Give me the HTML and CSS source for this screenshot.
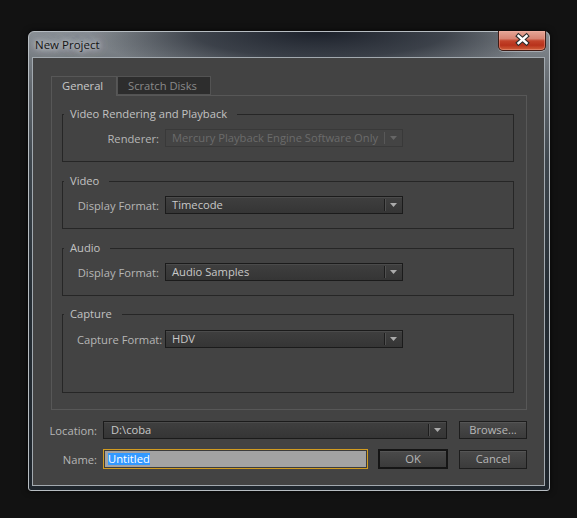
FILE: index.html
```html
<!DOCTYPE html>
<html>
<head>
<meta charset="utf-8">
<title>New Project</title>
<link rel="stylesheet" href="styles.css">
</head>
<body>
<div class="window">
  <div class="titlebar">
    <span class="title">New Project</span>
    <button class="close" aria-label="Close">
      <svg width="46" height="19" viewBox="0 0 46 19">
        <path d="M19.5 5 L27.5 12 M27.5 5 L19.5 12" stroke="#2b2b2b" stroke-width="4.6" stroke-linecap="square" fill="none"/>
        <path d="M19.5 5 L27.5 12 M27.5 5 L19.5 12" stroke="#ffffff" stroke-width="2.4" stroke-linecap="square" fill="none"/>
      </svg>
    </button>
  </div>
  <div class="client">
    <div class="tabs">
      <div class="tab active">General</div>
      <div class="tab inactive">Scratch Disks</div>
    </div>
    <div class="panel">
      <fieldset class="group">
        <legend>Video Rendering and Playback</legend>
        <div class="row">
          <span class="label">Renderer:</span>
          <div class="select disabled">
            <span class="value">Mercury Playback Engine Software Only</span>
            <span class="sep"></span>
            <span class="arrow"><svg width="7" height="4" viewBox="0 0 7 4"><polygon points="0,0 7,0 3.5,4" fill="#666"/></svg></span>
          </div>
        </div>
      </fieldset>
      <fieldset class="group">
        <legend>Video</legend>
        <div class="row">
          <span class="label">Display Format:</span>
          <div class="select">
            <span class="value">Timecode</span>
            <span class="sep"></span>
            <span class="arrow"><svg width="7" height="4" viewBox="0 0 7 4"><polygon points="0,0 7,0 3.5,4" fill="#ababab"/></svg></span>
          </div>
        </div>
      </fieldset>
      <fieldset class="group">
        <legend>Audio</legend>
        <div class="row">
          <span class="label">Display Format:</span>
          <div class="select">
            <span class="value">Audio Samples</span>
            <span class="sep"></span>
            <span class="arrow"><svg width="7" height="4" viewBox="0 0 7 4"><polygon points="0,0 7,0 3.5,4" fill="#ababab"/></svg></span>
          </div>
        </div>
      </fieldset>
      <fieldset class="group capture">
        <legend>Capture</legend>
        <div class="row">
          <span class="label">Capture Format:</span>
          <div class="select">
            <span class="value">HDV</span>
            <span class="sep"></span>
            <span class="arrow"><svg width="7" height="4" viewBox="0 0 7 4"><polygon points="0,0 7,0 3.5,4" fill="#ababab"/></svg></span>
          </div>
        </div>
      </fieldset>
    </div>
    <div class="bottom">
      <div class="brow">
        <span class="blabel">Location:</span>
        <div class="select loc">
          <span class="value">D:\coba</span>
          <span class="sep"></span>
          <span class="arrow"><svg width="7" height="4" viewBox="0 0 7 4"><polygon points="0,0 7,0 3.5,4" fill="#ababab"/></svg></span>
        </div>
        <div class="btn browse">Browse...</div>
      </div>
      <div class="brow">
        <span class="blabel">Name:</span>
        <div class="input"><span class="sel">Untitled</span></div>
        <div class="btn ok">OK</div>
        <div class="btn cancel">Cancel</div>
      </div>
    </div>
  </div>
</div>
</body>
</html>
```
FILE: styles.css
```css
html, body {
  margin: 0;
  padding: 0;
}
body {
  background: #121212;
  width: 577px;
  height: 518px;
  overflow: hidden;
  font-family: "Open Sans", "Noto Sans", sans-serif;
  font-size: 11.2px;
}
.window {
  box-sizing: border-box;
  width: 522px;
  height: 460px;
  margin: 31px 0 0 28px;
  border: 1px solid #b7bdc2;
  border-radius: 6px 6px 3px 3px;
  background:
    radial-gradient(ellipse 230px 46px at 56% 0, rgba(24, 29, 39, 0.97) 0%, rgba(24, 29, 39, 0.65) 55%, rgba(24, 29, 39, 0) 100%),
    linear-gradient(#888e93 0, #767c82 25px, #62686e 55px, #3e464d 130px, #252d34 260px, #1e252c 100%);
  box-shadow: 0 0 6px rgba(0, 0, 0, 0.7);
  display: flex;
  flex-direction: column;
}
.titlebar {
  height: 25px;
  flex: none;
  display: flex;
  justify-content: space-between;
  align-items: flex-start;
}
.title {
  margin: 5px 0 0 6px;
  font-size: 11.5px;
  line-height: 16px;
  color: #141414;
  text-shadow: 0 0 5px rgba(220, 224, 228, 1), 0 0 10px rgba(220, 224, 228, 0.9), 0 0 16px rgba(220, 224, 228, 0.75);
}
.close {
  box-sizing: border-box;
  width: 48px;
  height: 20px;
  margin: -1px 3px 0 0;
  padding: 0;
  border: 1px solid #3e1c16;
  border-top: none;
  border-radius: 0 0 5px 5px;
  background: linear-gradient(#e5a697 0, #d88473 40%, #c2432a 52%, #b8321b 75%, #d0603b 100%);
  box-shadow: inset 0 0 0 1px rgba(255, 190, 175, 0.35), 0 1px 0 rgba(220, 225, 230, 0.45);
  display: block;
}
.close svg {
  display: block;
}
.client {
  flex: 1;
  margin: 0 4px 4px 3px;
  border: 1px solid #a2a9af;
  background: #434343;
  padding: 18px 0 16px 0;
  display: flex;
  flex-direction: column;
}
.tabs {
  display: flex;
  height: 19px;
  margin-left: 18px;
}
.tab {
  box-sizing: border-box;
  height: 19px;
  line-height: 17px;
  padding-left: 10px;
  border: 1px solid #575757;
  white-space: nowrap;
}
.tab.active {
  width: 66px;
  height: 20px;
  border-bottom: none;
  background: #434343;
  color: #c9c9c9;
  position: relative;
  z-index: 1;
}
.tab.inactive {
  width: 94px;
  background: #2d2d2d;
  color: #8a8a8a;
  border-color: #535353;
}
.panel {
  box-sizing: border-box;
  width: 476px;
  margin-left: 18px;
  border: 1px solid #575757;
  padding: 11px 12px 16px 10px;
  display: flex;
  flex-direction: column;
  gap: 12px;
}
.group {
  margin: 0;
  padding: 0 0 14px 0;
  border: 1px solid #262626;
  min-inline-size: 0;
}
.group.capture {
  margin-top: -1px;
  padding-bottom: 44px;
}
.group legend {
  margin-left: 1px;
  padding: 0 10px 0 6px;
  line-height: 14px;
  color: #c2c2c2;
}
.row {
  display: flex;
  align-items: center;
  margin-top: 8px;
}
.group.capture .row {
  margin-top: 9px;
}
.label {
  width: 82px;
  margin-left: 14px;
  margin-right: 6px;
  text-align: right;
  color: #b6b6b6;
  white-space: nowrap;
}
.select {
  box-sizing: border-box;
  width: 238px;
  height: 18px;
  display: flex;
  align-items: center;
  border: 1px solid #1b1b1b;
  background: linear-gradient(#3f3f3f, #353535);
  box-shadow: inset 0 1px 0 #4b4b4b;
  color: #c8c8c8;
}
.select .value {
  flex: 1;
  padding-left: 6px;
  white-space: nowrap;
  overflow: hidden;
  line-height: 16px;
}
.select .sep {
  width: 1px;
  height: 12px;
  background: #1d1d1d;
  box-shadow: 1px 0 0 #505050;
}
.select .arrow {
  width: 17px;
  display: flex;
  justify-content: center;
  align-items: center;
}
.select .arrow svg {
  display: block;
}
.select.disabled {
  border-color: #393939;
  background: #444444;
  box-shadow: none;
  color: #6b6b6b;
}
.select.disabled .sep {
  background: #585858;
  box-shadow: none;
}
.bottom {
  margin-top: 11px;
  display: flex;
  flex-direction: column;
  gap: 10px;
}
.brow {
  display: flex;
  align-items: center;
}
.blabel {
  width: 64px;
  margin-right: 6px;
  text-align: right;
  color: #b6b6b6;
}
.select.loc {
  width: 344px;
}
.select.loc .value {
  padding-left: 7px;
}
.btn {
  box-sizing: border-box;
  height: 18px;
  display: flex;
  align-items: center;
  justify-content: center;
  border: 1px solid #1d1d1d;
  background: linear-gradient(#4a4a4a, #3b3b3b);
  box-shadow: inset 0 1px 0 #555555;
  color: #b7b7b7;
  line-height: 14px;
}
.btn.browse {
  width: 68px;
  margin-left: 12px;
}
.input {
  box-sizing: border-box;
  width: 265px;
  height: 20px;
  border: 1px solid #d29c20;
  box-shadow: inset 0 0 0 1px #3c3c3c;
  background: #a3a3a3;
  padding-left: 4px;
  display: flex;
  align-items: center;
}
.sel {
  display: inline-block;
  height: 12px;
  line-height: 12px;
  background: #3399ff;
  color: #ffffff;
}
.btn.ok {
  width: 70px;
  height: 20px;
  margin-left: 10px;
  border: 2px solid #151515;
}
.btn.cancel {
  width: 68px;
  height: 19px;
  margin-left: 11px;
}
```
